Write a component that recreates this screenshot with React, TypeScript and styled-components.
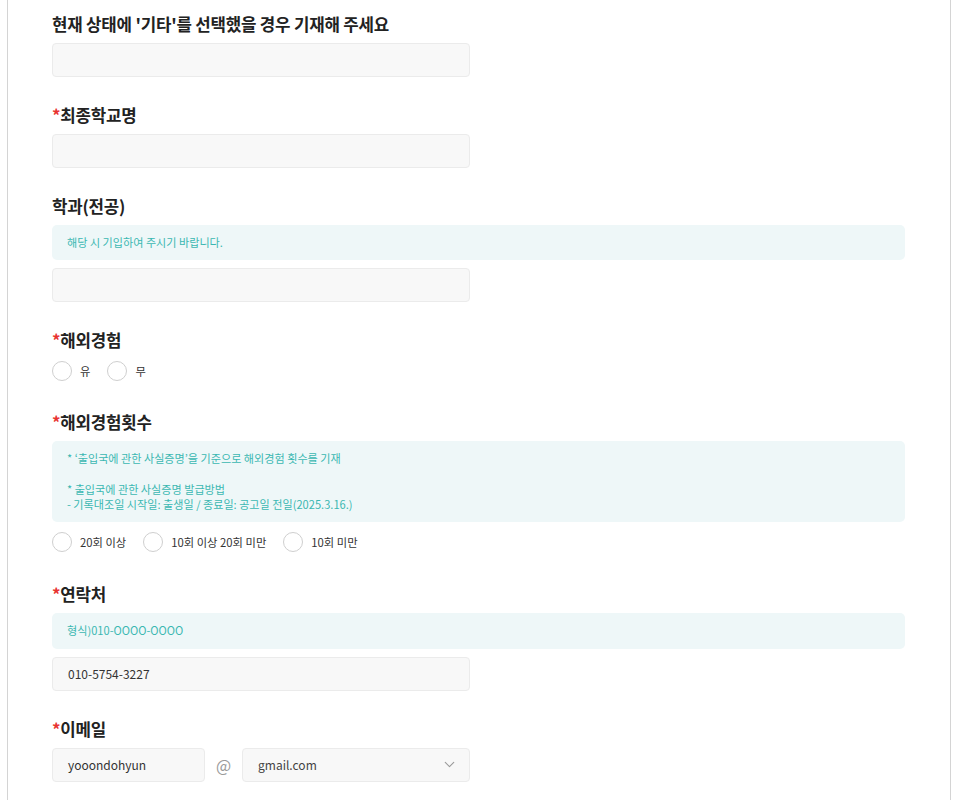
import React from "react";
import styled, { createGlobalStyle } from "styled-components";
import { ChevronDown } from "lucide-react";

const GlobalStyle = createGlobalStyle`
  html, body { margin: 0; padding: 0; background: #ffffff; }
  body { font-family: "Noto Sans CJK KR", "Noto Sans", sans-serif; color: #222; }
  * { box-sizing: border-box; }
`;

const Frame = styled.div`
  margin-left: 7px;
  width: 944px;
  min-height: 800px;
  border-left: 1px solid #d4d4d4;
  border-right: 1px solid #d4d4d4;
  padding: 12px 45px 40px 44px;
`;

const Form = styled.div`
  display: flex;
  flex-direction: column;
  gap: 26px;
`;

const Section = styled.div`
  display: flex;
  flex-direction: column;
  gap: 7px;
`;

const Label = styled.div`
  font-size: 16.8px;
  font-weight: 700;
  line-height: 24px;
  color: #222;
  letter-spacing: -0.2px;
`;

const Required = styled.span`
  color: #e8322f;
`;

const Field = styled.div<{ $width?: number }>`
  width: ${(p) => p.$width ?? 418}px;
  height: 34px;
  background: #f8f8f8;
  border: 1px solid #ebebeb;
  border-radius: 4px;
  display: flex;
  align-items: center;
  padding: 0 15px;
  font-size: 12px;
  color: #333;
`;

const FieldStack = styled.div`
  display: flex;
  flex-direction: column;
  gap: 8px;
`;

const Notice = styled.div`
  width: 100%;
  background: #eef7f8;
  border-radius: 5px;
  padding: 10px 15px;
  font-size: 11.1px;
  line-height: 15.25px;
  color: #3bb7b2;
`;

const RadioRow = styled.div<{ $tail?: number }>`
  display: flex;
  align-items: center;
  gap: 17px;
  height: 24px;
  margin-bottom: ${(p) => p.$tail ?? 0}px;
`;

const RadioOption = styled.label`
  display: flex;
  align-items: center;
  gap: 8px;
  font-size: 11.3px;
  color: #333;
`;

const Circle = styled.span`
  width: 20px;
  height: 20px;
  border-radius: 50%;
  border: 1px solid #cfcfcf;
  background: #fff;
  display: inline-block;
`;

const EmailRow = styled.div`
  display: flex;
  align-items: center;
`;

const At = styled.span`
  width: 37px;
  text-align: center;
  font-size: 16px;
  color: #9a9a9a;
`;

const Select = styled(Field)`
  justify-content: space-between;
  padding-right: 11px;
  color: #444;
`;

type RadioProps = { options: string[]; tail?: number };
const Radios = ({ options, tail }: RadioProps) => (
  <RadioRow $tail={tail}>
    {options.map((o) => (
      <RadioOption key={o}>
        <Circle />
        {o}
      </RadioOption>
    ))}
  </RadioRow>
);

export default function App() {
  return (
    <>
      <GlobalStyle />
      <Frame>
        <Form>
          <Section>
            <Label>현재 상태에 '기타'를 선택했을 경우 기재해 주세요</Label>
            <Field />
          </Section>
          <Section>
            <Label>
              <Required>*</Required>최종학교명
            </Label>
            <Field />
          </Section>
          <Section>
            <Label>학과(전공)</Label>
            <FieldStack>
              <Notice>해당 시 기입하여 주시기 바랍니다.</Notice>
              <Field />
            </FieldStack>
          </Section>
          <Section>
            <Label>
              <Required>*</Required>해외경험
            </Label>
            <Radios options={["유", "무"]} tail={1} />
          </Section>
          <Section>
            <Label>
              <Required>*</Required>해외경험횟수
            </Label>
            <FieldStack>
              <Notice>
                * ‘출입국에 관한 사실증명’을 기준으로 해외경험 횟수를 기재
                <br />
                <br />
                * 출입국에 관한 사실증명 발급방법
                <br />- 기록대조일 시작일: 출생일 / 종료일: 공고일 전일(2025.3.16.)
              </Notice>
              <Radios options={["20회 이상", "10회 이상 20회 미만", "10회 미만"]} tail={2} />
            </FieldStack>
          </Section>
          <Section>
            <Label>
              <Required>*</Required>연락처
            </Label>
            <FieldStack>
              <Notice>형식)010-OOOO-OOOO</Notice>
              <Field>010-5754-3227</Field>
            </FieldStack>
          </Section>
          <Section>
            <Label>
              <Required>*</Required>이메일
            </Label>
            <EmailRow>
              <Field $width={153}>yooondohyun</Field>
              <At>@</At>
              <Select $width={228}>
                gmail.com
                <ChevronDown size={17} color="#9a9a9a" strokeWidth={1.5} />
              </Select>
            </EmailRow>
          </Section>
        </Form>
      </Frame>
    </>
  );
}
